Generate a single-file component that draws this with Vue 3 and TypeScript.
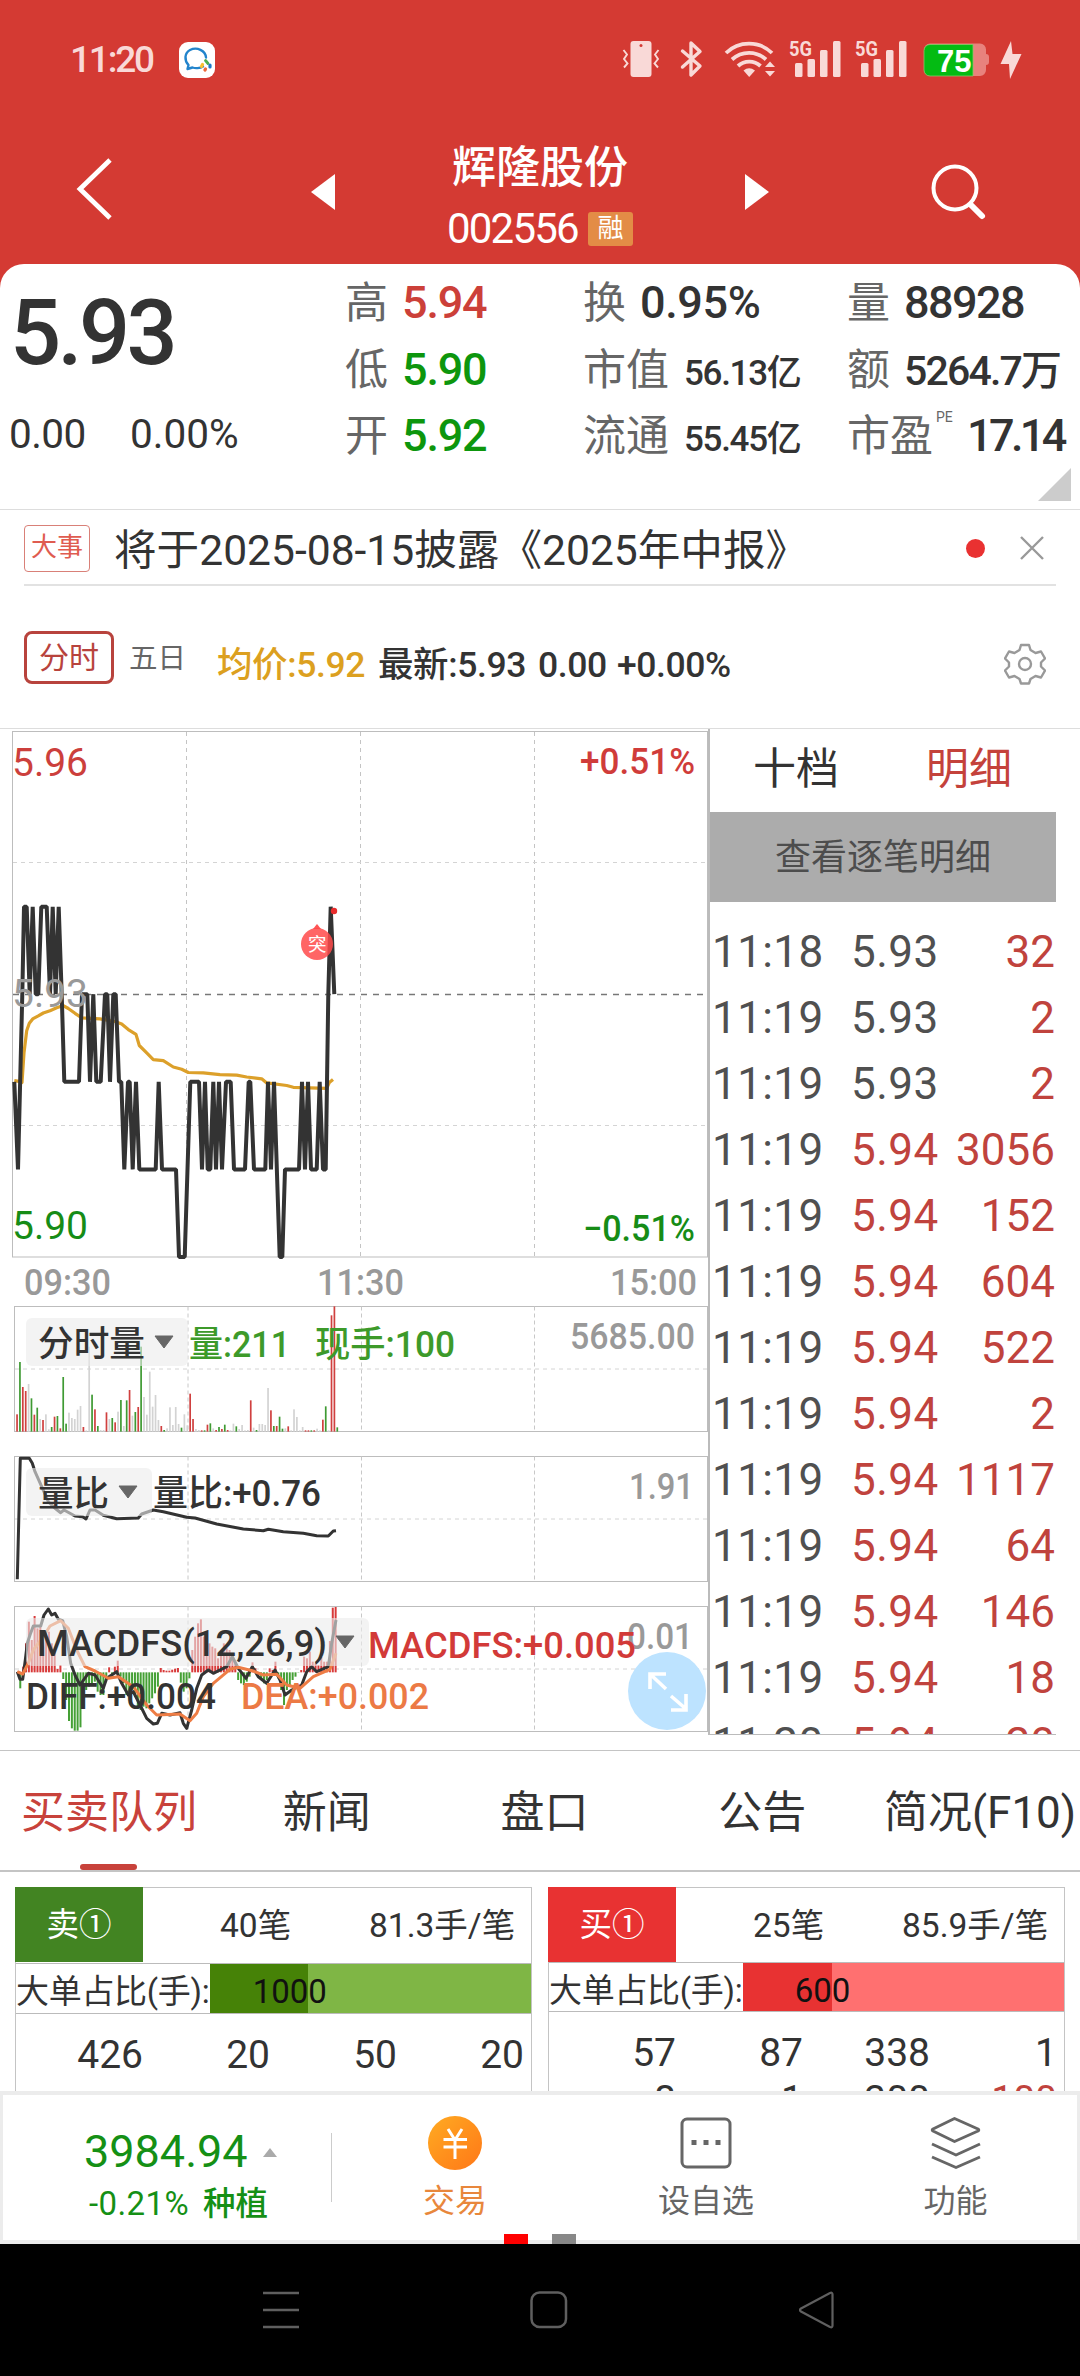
<script setup lang="ts">
type Tone = 'r' | 'g' | 'n'
type Pt = [number, number]

interface Label {
  x: number
  y: number
  w: number
  size: number
  text: string
  fill: string
  weight?: number
}

// ---- price chart -------------------------------------------------------
const priceY = (v: number): number => 731.5 + (5.96 - v) * 8758

const price: Pt[] = [
  [43, 92], [54, 91], [67, 93], [72, 94], [80, 94], [89, 93], [98, 94], [107, 93], [115, 93], [124, 94],
  [140, 94], [150, 93], [158, 94], [167, 93], [176, 94], [185, 93], [193, 92], [237, 92], [246, 93], [262, 93],
  [270, 92], [280, 93], [289, 92], [302, 92], [315, 93], [322, 93], [330, 92], [340, 93], [347, 93], [357, 92], [364, 92],
  [373, 91], [384, 92], [389, 92], [398, 91], [408, 92], [418, 91], [467, 91], [476, 92], [486, 91], [528, 91],
  [537, 90], [554, 90], [571, 92], [597, 92], [606, 91], [615, 92], [623, 91], [631, 91], [640, 92], [648, 91],
  [657, 92], [666, 91], [678, 92], [692, 92], [702, 91], [735, 91], [746, 92], [751, 92], [762, 91], [796, 91],
  [804, 92], [813, 91], [822, 92], [839, 90], [847, 90], [855, 91], [897, 91], [906, 92], [915, 91], [924, 92],
  [933, 91], [950, 91], [959, 92], [969, 91], [977, 91], [985, 93], [992, 94], [1003, 93],
]
const priceLine = price.map(([x, v]) => `${(x / 3).toFixed(1)},${priceY(5 + v / 100).toFixed(1)}`).join(' ')

const average: Pt[] = [
  [43, 975], [57, 977], [66, 980], [72, 900], [80, 840], [88, 820], [98, 808], [115, 800], [130, 792], [150, 786],
  [170, 778], [190, 772], [205, 780], [225, 793], [245, 805], [300, 808], [345, 815], [365, 822], [385, 837],
  [408, 850], [418, 880], [440, 900], [460, 918], [490, 921], [520, 938], [545, 944], [565, 953], [610, 954],
  [660, 959], [710, 960], [740, 965], [785, 970], [800, 981], [860, 988], [880, 993], [980, 996], [988, 980], [999, 972],
]
const averageLine = average.map(([x, y]) => `${(x / 3).toFixed(1)},${(720 + y / 2.7034).toFixed(1)}`).join(' ')

// ---- indicator charts --------------------------------------------------
const fill: Record<Tone, string> = { r: '#d0403f', g: '#3f9a33', n: '#d3d3d3' }

const volume =
  'r373 g216 r291 r303 n282 g325 r374 g353 n387 r390 n373 n418 g411 r380 g378 r415 g261 g401 n368 n384 n387 n359 n348 r411 n421 n170 g314 r358 g408 n420 n420 r367 n387 g384 r397 n365 g330 n408 g331 r300 n377 g366 r351 g170 n321 n374 n245 n350 n315 n390 r408 g420 n415 n352 n405 n351 n402 g413 n373 n406 r311 r387 n417 n420 r421 g421 r404 g400 n415 r420 g411 r417 g404 r420 n421 n401 g409 n417 n405 n421 n420 r331 n413 g420 n402 n402 n405 n294 r361 g408 r408 g380 g416 n415 r409 n421 n358 n381 n421 n411 r421 r421 g421 r421 n416 n421 r389 g349 n421 r76 r49 g412'
    .split(' ')
    .map((s, i) => ({ x: 17 + i * 2.885, top: 1290 + Number(s.slice(1)) / 3, fill: fill[s[0] as Tone] }))

const macd: number[] = [
  1146, 1195, 1130, 1060, 995, 1050, 978, 1015, 1010, 1040, 1030, 1025, 1060, 1085, 1137, 1125, 1167, 1230, 1293,
  1315, 1322, 1322, 1312, 1250, 1200, 1190, 1180, 1175, 1205, 1215, 1215, 1160, 1132, 1160, 1130, 1112, 1160, 1180,
  1215, 1215, 1200, 1220, 1250, 1260, 1250, 1255, 1240, 1225, 1210, 1190, 1134, 1140, 1142, 1142, 1139, 1136, 1134,
  1178, 1205, 1195, 1165, 1080, 1040, 1000, 988, 1040, 1050, 1060, 1070, 1075, 1105, 1085, 1060, 1075, 1080, 1090,
  1120, 1170, 1180, 1185, 1175, 1160, 1117, 1135, 1160, 1165, 1180, 1170, 1135, 1140, 1115, 1165, 1200, 1245, 1200,
  1185, 1170, 1160, 1148, 1140, 1100, 1105, 1085, 1115, 1120, 1125, 1100, 1115, 1115, 1053, 953, 951,
]
const macdBars = macd.map((v, i) => ({
  x: 17.4 + i * 2.867,
  y: 1290 + Math.min(v, 1147) / 3,
  h: Math.abs(v - 1147) / 3,
  fill: v < 1147 ? '#d83a3a' : '#45a035',
}))

const trace = (s: string): string =>
  s
    .split(' ')
    .map((p) => p.split(',').map(Number))
    .map(([x, y]) => `${(x / 3).toFixed(1)},${(1290 + y / 3).toFixed(1)}`)
    .join(' ')

const ratioLine = trace(
  '52,868 61,505 88,505 97,520 105,545 125,590 145,635 165,655 182,668 192,660 225,678 248,680 258,687 270,660 285,660 310,676 350,686 415,684 425,672 460,660 490,665 560,682 585,684 650,702 730,717 790,722 805,718 850,725 910,730 950,737 985,738 1000,723 1008,722',
)
const diffLine = trace(
  '52,1145 60,1168 68,1168 76,1110 82,1060 90,1035 100,1008 122,1008 132,975 145,957 155,975 165,970 175,988 188,992 200,1040 212,1120 225,1155 240,1185 265,1150 285,1155 310,1195 320,1165 350,1145 365,1180 385,1215 400,1205 425,1255 440,1285 460,1302 472,1300 485,1270 510,1275 540,1268 550,1300 560,1315 575,1260 590,1195 605,1155 625,1140 640,1150 680,1130 697,1100 715,1135 738,1165 757,1130 775,1160 800,1180 825,1140 840,1170 855,1215 875,1200 905,1185 920,1145 935,1130 950,1145 985,1130 995,1060 1008,990',
)
const deaLine = trace(
  '52,1145 68,1152 85,1120 100,1080 130,1040 150,1008 182,992 205,1015 230,1080 255,1130 285,1143 325,1165 355,1160 400,1190 440,1245 470,1275 540,1272 570,1292 590,1270 610,1220 640,1180 690,1138 715,1132 760,1143 790,1155 830,1153 860,1185 900,1195 940,1160 990,1138 1008,1090',
)

const panes = [1306.5, 1456.5, 1606.5]

const chips = [
  { y: 1318, w: 162, arrow: 155 },
  { y: 1468, w: 126, arrow: 119 },
  { y: 1618, w: 343, arrow: 336 },
]

const labels: Label[] = [
  { x: 12, y: 775.5, w: 76, size: 38, text: '5.96', fill: '#cc3f3c' },
  { x: 12, y: 1007.4, w: 76, size: 38, text: '5.93', fill: '#999' },
  { x: 12, y: 1238.5, w: 76, size: 38, text: '5.90', fill: '#168c16' },
  { x: 580, y: 774, w: 115, size: 36, text: '+0.51%', fill: '#d03c3a', weight: 500 },
  { x: 583, y: 1241, w: 112, size: 36, text: '−0.51%', fill: '#168c16', weight: 500 },
  { x: 24, y: 1294.5, w: 87, size: 36, text: '09:30', fill: '#999', weight: 500 },
  { x: 317, y: 1294.5, w: 87, size: 36, text: '11:30', fill: '#999', weight: 500 },
  { x: 610, y: 1294.5, w: 87, size: 36, text: '15:00', fill: '#999', weight: 500 },
  { x: 38, y: 1356, w: 107, size: 35.5, text: '分时量', fill: '#333', weight: 500 },
  { x: 189, y: 1357, w: 101, size: 36, text: '量:211', fill: '#3d9a2a', weight: 500 },
  { x: 315, y: 1357, w: 140, size: 36, text: '现手:100', fill: '#3d9a2a', weight: 500 },
  { x: 570, y: 1349, w: 125, size: 36, text: '5685.00', fill: '#999', weight: 500 },
  { x: 38, y: 1506, w: 71, size: 35.5, text: '量比', fill: '#333', weight: 500 },
  { x: 153, y: 1506, w: 168, size: 36, text: '量比:+0.76', fill: '#333', weight: 500 },
  { x: 629, y: 1499, w: 65, size: 36, text: '1.91', fill: '#999', weight: 500 },
  { x: 37, y: 1656, w: 290, size: 36, text: 'MACDFS(12,26,9)', fill: '#333', weight: 500 },
  { x: 627, y: 1649, w: 66, size: 36, text: '0.01', fill: '#999', weight: 500 },
  { x: 368, y: 1657.5, w: 268, size: 36, text: 'MACDFS:+0.005', fill: '#d23a38', weight: 500 },
  { x: 26, y: 1708.5, w: 190, size: 36, text: 'DIFF:+0.004', fill: '#333', weight: 500 },
  { x: 241, y: 1708.5, w: 188, size: 36, text: 'DEA:+0.002', fill: '#ec7a45', weight: 500 },
]

// ---- lists -------------------------------------------------------------
const ticks: { t: string; p: string; v: string }[] = [
  { t: '11:18', p: '5.93', v: '32' },
  { t: '11:19', p: '5.93', v: '2' },
  { t: '11:19', p: '5.93', v: '2' },
  { t: '11:19', p: '5.94', v: '3056' },
  { t: '11:19', p: '5.94', v: '152' },
  { t: '11:19', p: '5.94', v: '604' },
  { t: '11:19', p: '5.94', v: '522' },
  { t: '11:19', p: '5.94', v: '2' },
  { t: '11:19', p: '5.94', v: '1117' },
  { t: '11:19', p: '5.94', v: '64' },
  { t: '11:19', p: '5.94', v: '146' },
  { t: '11:19', p: '5.94', v: '18' },
  { t: '11:20', p: '5.94', v: '20' },
]

const tabs = ['买卖队列', '新闻', '盘口', '公告', '简况(F10)']

const queues = [
  { side: 'sell', name: '卖①', count: '40笔', avg: '81.3手/笔', big: '1000', share: 98, rows: [['426', '20', '50', '20']] },
  { side: 'buy', name: '买①', count: '25笔', avg: '85.9手/笔', big: '600', share: 89, rows: [['57', '87', '338', '1'], ['8', '1', '300', '100']] },
]
</script>

<template>
  <div class="screen">
    <header class="top">
      <div class="status">
        <span class="clock">11:20</span>
        <svg class="chat" width="36" height="36" viewBox="0 0 36 36">
          <rect width="36" height="36" rx="9" fill="#fff" />
          <path d="M24 24.500C21 26.500 16 26.500 13.500 25.500L8.500 27L9.500 23C5 18 5.500 11 11 8C18 4.500 26.500 8.500 27 15.500" fill="none" stroke="#2284cc" stroke-width="2.400" stroke-linecap="round" stroke-linejoin="round" />
          <path d="M26.500 18.500l2.500 3" stroke="#4caf50" stroke-width="2.800" stroke-linecap="round" />
          <path d="M31 23l0 2" stroke="#1d78c8" stroke-width="3.200" stroke-linecap="round" />
          <path d="M23.500 22.500l-1 2" stroke="#f8c030" stroke-width="3.200" stroke-linecap="round" />
          <path d="M26 28l0.500-1" stroke="#ec6a3a" stroke-width="3.200" stroke-linecap="round" />
        </svg>
        <svg class="sys" width="430" height="60" viewBox="0 0 430 60">
          <g fill="#f9d9d7">
            <path d="M23.500 11h15a3 3 0 0 1 3 3v30a3 3 0 0 1-3 3h-15a3 3 0 0 1-3-3v-30a3 3 0 0 1 3-3z" />
            <circle cx="31" cy="15.500" r="1.500" fill="#d43a33" />
            <path d="M13.500 20l3.500 4.500-3 4.500 3.500 4.500-3.500 4M48.500 20l-3.500 4.500 3 4.500-3.500 4.500 3.500 4" fill="none" stroke="#f9d9d7" stroke-width="1.900" />
            <path d="M72.500 21l17.500 15-9 9V13l9 8.500L72.500 37" fill="none" stroke="#f9d9d7" stroke-width="3.400" stroke-linejoin="round" stroke-linecap="round" />
            <g fill="none" stroke="#f9d9d7" stroke-width="3.800">
              <path d="M116 23a33 33 0 0 1 46 0" />
              <path d="M122 29.500a25 25 0 0 1 34 0" />
              <path d="M128 36a16.500 16.500 0 0 1 22.500 0" />
            </g>
            <path d="M133.500 40.500q5.500-4.500 11.500 0l-5.800 6.500z" />
            <path d="M160 31.500l5 5.500h-10zM160 46.500l-5-5.500h10z" />
            <text x="179" y="25.500" font-size="20.500" font-weight="700" textLength="23" lengthAdjust="spacingAndGlyphs">5G</text>
            <rect x="185" y="33" width="7.500" height="14" rx="1.500" /><rect x="197.500" y="29" width="7.500" height="18" rx="1.500" /><rect x="210" y="20" width="7.500" height="27" rx="1.500" /><rect x="223" y="11" width="7.500" height="36" rx="1.500" />
            <text x="245" y="25.500" font-size="20.500" font-weight="700" textLength="23" lengthAdjust="spacingAndGlyphs">5G</text>
            <rect x="251" y="33" width="7.500" height="14" rx="1.500" /><rect x="263.500" y="29" width="7.500" height="18" rx="1.500" /><rect x="276" y="20" width="7.500" height="27" rx="1.500" /><rect x="289" y="11" width="7.500" height="36" rx="1.500" />
            <path d="M320 13.500h50a6 6 0 0 1 6 6v4.500q3 0 3 3v5q0 3-3 3v5a6 6 0 0 1-6 6h-50a6 6 0 0 1-6-6v-20.500a6 6 0 0 1 6-6z" fill="#e8827d" />
            <path d="M320 14.500h43v31.500h-43a6 6 0 0 1-6-6v-19.500a6 6 0 0 1 6-6z" fill="#04bb13" stroke="#8bc46a" stroke-width="0.800" />
            <text x="327" y="41.500" font-size="31" font-weight="700" fill="#fff" textLength="34.500" lengthAdjust="spacingAndGlyphs" font-family="Liberation Sans">75</text>
            <path d="M401 11l-10.500 23h8.500l1 15 11.500-25h-9z" />
          </g>
        </svg>
      </div>
      <div class="bar">
        <svg class="back" width="40" height="66" viewBox="0 0 40 66"><path d="M36 4L6 33L36 62" fill="none" stroke="#fff" stroke-width="4.800" /></svg>
        <svg class="prev" width="24" height="36" viewBox="0 0 24 36"><path d="M24 0v36L0 18z" fill="#fff" /></svg>
        <div class="title">
          <div class="name">辉隆股份</div>
          <div class="code"><span>002556</span><i>融</i></div>
        </div>
        <svg class="next" width="24" height="36" viewBox="0 0 24 36"><path d="M0 0v36L24 18z" fill="#fff" /></svg>
        <svg class="find" width="56" height="58" viewBox="0 0 56 58"><circle cx="24" cy="25" r="21.500" fill="none" stroke="#fff" stroke-width="4" /><path d="M40 42L51 53" stroke="#fff" stroke-width="6" stroke-linecap="round" /></svg>
      </div>
    </header>

    <section class="quote">
      <div class="last">
        <b>5.93</b>
        <div class="chg"><span>0.00</span><span>0.00%</span></div>
      </div>
      <div class="col c1">
        <div><em>高</em><strong class="up">5.94</strong></div>
        <div><em>低</em><strong class="down">5.90</strong></div>
        <div><em>开</em><strong class="down">5.92</strong></div>
      </div>
      <div class="col c2">
        <div><em>换</em><strong>0.95%</strong></div>
        <div><em>市值</em><strong class="sm">56.13亿</strong></div>
        <div><em>流通</em><strong class="sm">55.45亿</strong></div>
      </div>
      <div class="col c3">
        <div><em>量</em><strong class="vol">88928</strong></div>
        <div><em>额</em><strong class="amt">5264.7万</strong></div>
        <div><em>市盈</em><sup>PE</sup><strong class="pe">17.14</strong></div>
      </div>
      <svg class="corner" width="33" height="33" viewBox="0 0 33 33"><path d="M33 0V33H0z" fill="#ccc" /></svg>
    </section>

    <section class="notice">
      <span class="tag">大事</span>
      <span class="msg">将于2025-08-15披露《2025年中报》</span>
      <i class="dot"></i>
      <svg class="close" width="24" height="24" viewBox="0 0 24 24"><path d="M1 1L23 23M23 1L1 23" stroke="#999" stroke-width="2.400" /></svg>
    </section>

    <section class="period">
      <span class="minute">分时</span>
      <span class="five">五日</span>
      <span class="k avg">均价:5.92</span>
      <span class="k">最新:5.93</span>
      <span class="k zero">0.00</span>
      <span class="k pct">+0.00%</span>
      <svg class="gear" width="42" height="42" viewBox="0 0 42 42">
        <g fill="none" stroke="#999" stroke-width="2.400" stroke-linejoin="round">
          <path d="M17 2h8l1.500 5 5 3 5.500-1.500 4 7-4 4v4l4 4-4 7-5.500-1.500-5 3L25 40.500h-8L15.500 36l-5-3L5 34.500l-4-7 4-4v-4l-4-4 4-7L10.500 10l5-3z" />
          <circle cx="21" cy="21" r="6" />
        </g>
      </svg>
    </section>

    <section class="market">
      <svg class="chart" width="708" height="1021" viewBox="0 729 708 1021">
        <g fill="none" stroke="#bdbdbd" stroke-width="1">
          <rect x="12.500" y="731.500" width="695" height="525.500" />
          <path d="M186.500 732V1257M360.500 732V1257M534.500 732V1257" stroke="#c4c4c4" stroke-dasharray="4 4" />
          <path d="M13 862.500H707M13 1125.500H707" stroke="#d4d4d4" stroke-dasharray="4 4" />
          <path d="M13 994.500H707" stroke="#777" stroke-width="1.400" stroke-dasharray="6 6" />
          <g v-for="y in panes" :key="y">
            <rect x="14.500" :y="y" width="693" height="125" />
            <path :d="`M188 ${y}v125M361.500 ${y}v125M534.500 ${y}v125`" stroke="#c8c8c8" stroke-dasharray="4 3" />
            <path :d="`M15 ${y + 62.5}H707`" stroke="#d4d4d4" stroke-dasharray="4 4" />
          </g>
        </g>
        <polyline :points="averageLine" fill="none" stroke="#dca02a" stroke-width="3.200" stroke-linejoin="round" />
        <polyline :points="priceLine" fill="none" stroke="#333" stroke-width="4" stroke-linejoin="bevel" />
        <circle cx="334" cy="911" r="3.200" fill="#e82c2c" />
        <path d="M317 924l4 5h-8z" fill="#ff5555" />
        <circle cx="317" cy="944" r="16" fill="#ff4a4a" fill-opacity=".85" />
        <text x="308" y="951" font-size="18.500" fill="#fff">突</text>

        <rect v-for="(b, i) in volume" :key="'v' + i" :x="b.x - 0.8" :y="b.top" width="1.700" :height="1431.6 - b.top" :fill="b.fill" />
        <polyline :points="ratioLine" fill="none" stroke="#333" stroke-width="3" stroke-linejoin="round" />
        <rect v-for="(b, i) in macdBars" :key="'m' + i" :x="b.x - 1" :y="b.y" width="2" :height="b.h" :fill="b.fill" />
        <polyline :points="diffLine" fill="none" stroke="#333" stroke-width="3" stroke-linejoin="round" />
        <polyline :points="deaLine" fill="none" stroke="#ee7d45" stroke-width="3" stroke-linejoin="round" />

        <g v-for="c in chips" :key="c.y">
          <rect x="26" :y="c.y" :width="c.w" height="48" rx="6" fill="#ebebeb" fill-opacity=".6" />
          <path :d="`M${c.arrow} ${c.y + 18}h18l-9 12z`" fill="#666" stroke="#666" stroke-linejoin="round" />
        </g>
        <text
          v-for="l in labels"
          :key="l.text + l.y"
          :x="l.x"
          :y="l.y"
          :textLength="l.w"
          lengthAdjust="spacingAndGlyphs"
          :font-size="l.size"
          :font-weight="l.weight ?? 400"
          :fill="l.fill"
        >{{ l.text }}</text>
        <circle cx="667" cy="1691" r="39" fill="#bde3ff" />
        <path d="M666 1689L650 1674M650 1689V1674H666M671 1696L686 1709M671 1710H686V1694" fill="none" stroke="#fff" stroke-width="3.600" />
      </svg>

      <aside class="panel">
        <div class="ptabs"><span>十档</span><span class="act">明细</span></div>
        <div class="each">查看逐笔明细</div>
        <div class="ticks">
          <div v-for="(r, i) in ticks" :key="i" class="tick">
            <span class="t">{{ r.t }}</span>
            <span class="p" :class="{ hot: r.p === '5.94' }">{{ r.p }}</span>
            <span class="v">{{ r.v }}</span>
          </div>
        </div>
      </aside>
    </section>

    <nav class="tabs">
      <span v-for="(t, i) in tabs" :key="t" :class="{ act: i === 0 }">{{ t }}</span>
    </nav>

    <section class="queues">
      <div v-for="q in queues" :key="q.side" class="queue" :class="q.side">
        <div class="qh"><b>{{ q.name }}</b><span class="cnt">{{ q.count }}</span><span class="per">{{ q.avg }}</span></div>
        <div class="qb">
          <span class="cap">大单占比(手):</span>
          <div class="meter"><i :style="{ width: q.share + 'px' }"></i><span>{{ q.big }}</span></div>
        </div>
        <div class="rows">
          <div v-for="(r, i) in q.rows" :key="i" class="row"><span v-for="(n, j) in r" :key="j" :class="{ hot: i === 1 && j === 3 }">{{ n }}</span></div>
        </div>
      </div>
    </section>

    <footer class="dock">
      <div class="index">
        <div class="pt">3984.94<svg width="14" height="9" viewBox="0 0 14 9"><path d="M7 0l7 9H0z" fill="#aaa" /></svg></div>
        <div class="pc"><span>-0.21%</span><b>种植</b></div>
      </div>
      <div class="act trade">
        <svg width="54" height="54" viewBox="0 0 54 54">
          <defs><linearGradient id="coin" x1="0" y1="0" x2="1" y2="1"><stop offset="0" stop-color="#ffab22" /><stop offset="1" stop-color="#ff7717" /></linearGradient></defs>
          <circle cx="27" cy="27" r="27" fill="url(#coin)" />
          <path d="M20 13l7 11 7-11M15.500 23.500h23.500M15.500 31h23.500M27 23v20" fill="none" stroke="#fff" stroke-width="3" />
        </svg>
        <span>交易</span>
      </div>
      <div class="act own">
        <svg width="54" height="54" viewBox="0 0 54 54"><rect x="3" y="3" width="48" height="48" rx="5" fill="none" stroke="#666" stroke-width="3" /><path d="M12.500 24h5v5h-5zM24.500 24h5v5h-5zM36.500 24h5v5h-5z" fill="#666" /></svg>
        <span>设自选</span>
      </div>
      <div class="act more">
        <svg width="54" height="54" viewBox="0 0 54 54"><path d="M25.500 2.500L49 13q1.500 1 0 2L25.500 25.500 4 15q-1.500-1 0-2zM3 28l24 11L51 28M3 41l24 10.500L51 41" fill="none" stroke="#666" stroke-width="3" stroke-linejoin="round" /></svg>
        <span>功能</span>
      </div>
      <i class="pg first"></i><i class="pg"></i>
    </footer>

    <div class="sysnav">
      <svg width="36" height="38" viewBox="0 0 36 38"><path d="M0 2h36M0 19h36M0 36h36" stroke="#5f5f5f" stroke-width="2.600" /></svg>
      <svg width="38" height="38" viewBox="0 0 38 38"><rect x="1.500" y="1.500" width="34.500" height="34.500" rx="8" fill="none" stroke="#5f5f5f" stroke-width="2.500" /></svg>
      <svg width="36" height="38" viewBox="0 0 36 38"><path d="M2 17.500L31 2q2.500-1 2.500 1.500v31q0 2.500-2.500 1.500L2 20.500q-2-1.500 0-3z" fill="none" stroke="#5f5f5f" stroke-width="2.200" /></svg>
    </div>
  </div>
</template>

<style>
body {
  background: #000;
}
</style>

<style scoped>
.screen {
  width: 1080px;
  height: 2376px;
  display: flex;
  flex-direction: column;
  overflow: hidden;
  background: #fff;
  color: #333;
  font-family: Roboto, 'Noto Sans CJK SC', sans-serif;
}
.screen * {
  box-sizing: border-box;
}
.screen > * {
  flex: none;
}
i,
em {
  font-style: normal;
}
span,
b,
strong,
em {
  white-space: nowrap;
}
svg {
  display: block;
  flex: none;
}

.top {
  height: 288px;
  background: #d43a33;
  color: #fff;
}
.status {
  height: 120px;
  display: flex;
  align-items: center;
}
.clock {
  width: 109px;
  margin-left: 70px;
  font-size: 37px;
  font-weight: 500;
  line-height: 40px;
  letter-spacing: -2.2px;
  color: #f9d9d7;
}
.sys {
  margin-left: auto;
  margin-right: 40px;
}
.bar {
  height: 144px;
  display: flex;
  align-items: flex-start;
}
.back {
  margin: 36px 0 0 74px;
}
.prev {
  margin: 54px 0 0 197px;
}
.title {
  width: 410px;
  padding-top: 23px;
}
.name {
  text-align: center;
  font-size: 44px;
  line-height: 50px;
  font-weight: 500;
}
.code {
  display: flex;
  align-items: center;
  padding-left: 112px;
  height: 36px;
  margin-top: 18px;
}
.code span {
  font-size: 42px;
  line-height: 36px;
  letter-spacing: -1.8px;
  width: 141px;
}
.code i {
  width: 45px;
  height: 34px;
  border-radius: 3px;
  background: #e38c46;
  font-size: 26px;
  line-height: 33px;
  text-align: center;
}
.next {
  margin: 54px 0 0 0;
}
.find {
  margin: 43px 0 0 162px;
}

.quote {
  position: relative;
  height: 246px;
  margin-top: -24px;
  border-radius: 24px 24px 0 0;
  background: #fff;
  display: flex;
  border-bottom: 1px solid #ddd;
  padding-top: 6px;
}
.last {
  width: 345px;
}
.last b {
  display: block;
  padding-left: 10px;
  margin-top: 16px;
  font-size: 90px;
  line-height: 96px;
  font-weight: 500;
  letter-spacing: -3.6px;
}
.chg {
  display: flex;
  margin-top: 30px;
  padding-left: 9px;
  font-size: 40.5px;
  line-height: 44px;
  letter-spacing: 0;
}
.chg span:first-child {
  width: 121px;
  letter-spacing: -0.6px;
}
.col > div {
  height: 66.5px;
  line-height: 66px;
  display: flex;
  align-items: baseline;
}
.c1 {
  width: 238px;
}
.c2 {
  width: 264px;
}
em {
  font-size: 43px;
  color: #666;
  margin-right: 14px;
}
strong {
  font-size: 45px;
  font-weight: 500;
  letter-spacing: -1.2px;
}
.c2 strong {
  letter-spacing: -0.4px;
}
.c2 .sm {
  font-size: 35px;
  letter-spacing: -1.3px;
  margin-left: 1px;
}
.vol {
  letter-spacing: -1.6px;
}
.amt {
  font-size: 41px;
  letter-spacing: -1.8px;
}
.pe {
  letter-spacing: -3.6px;
}
.c3 sup {
  font-size: 14px;
  line-height: 20px;
  width: 31px;
  margin-left: -11px;
  align-self: flex-start;
  color: #666;
  margin-top: 4px;
}
.up {
  color: #cc4039;
}
.down {
  color: #0d960d;
}
.corner {
  position: absolute;
  right: 9px;
  bottom: 8px;
}

.notice {
  height: 76px;
  margin: 0 24px;
  width: 1032px;
  display: flex;
  align-items: center;
  border-bottom: 2px solid #e2e2e2;
}
.tag {
  width: 66px;
  height: 47px;
  margin-top: 2px;
  border: 1.5px solid #d98078;
  border-radius: 4px;
  color: #df5c50;
  font-size: 26px;
  line-height: 43px;
  text-align: center;
}
.msg {
  margin-left: 24px;
  margin-top: 5px;
  width: 852px;
  font-size: 42.6px;
  line-height: 50px;
}
.dot {
  width: 19px;
  height: 19px;
  border-radius: 50%;
  background: #e93131;
  margin-top: 2px;
}
.close {
  margin-left: 35px;
  margin-top: 2px;
}

.period {
  height: 143px;
  display: flex;
  align-items: flex-start;
  border-bottom: 1px solid #ddd;
  padding: 45px 0 0 24px;
}
.minute {
  width: 90px;
  height: 53px;
  border: 3px solid #b8433d;
  border-radius: 8px;
  color: #b8433d;
  font-size: 30px;
  line-height: 48px;
  text-align: center;
}
.five {
  margin-left: 15px;
  width: 88px;
  font-size: 28.5px;
  line-height: 55px;
  color: #666;
}
.k {
  font-size: 35.5px;
  line-height: 68px;
  font-weight: 500;
  width: 160px;
  letter-spacing: -0.4px;
}
.avg {
  width: 161px;
  color: #dca020;
}
.zero {
  width: 79px;
}
.pct {
  width: 387px;
}
.gear {
  margin-top: 12px;
}

.market {
  height: 1021px;
  display: flex;
}
.chart {
  width: 708px;
}
.panel {
  width: 348px;
  height: 1006px;
  border-left: 2px solid #bbb;
  border-bottom: 1px solid #bbb;
  overflow: hidden;
}
.ptabs {
  height: 83px;
  display: flex;
  justify-content: space-between;
  font-size: 43px;
  line-height: 81px;
  padding: 0 44px 0 43px;
}
.ptabs .act {
  color: #c4423b;
}
.each {
  height: 90px;
  background: #acacac;
  color: #4d4d4d;
  font-size: 36px;
  line-height: 92px;
  text-align: center;
}
.ticks {
  padding-top: 17px;
}
.tick {
  height: 66px;
  display: flex;
  font-size: 44px;
  line-height: 66px;
  color: #505050;
}
.t {
  width: 141px;
  padding-left: 2px;
  letter-spacing: 0.4px;
}
.p {
  width: 90px;
  letter-spacing: 0.5px;
}
.v {
  width: 114px;
  text-align: right;
  color: #c0433d;
}
.hot {
  color: #c0433d !important;
}

.tabs {
  height: 122px;
  border-top: 1px solid #c4c4c4;
  border-bottom: 2px solid #c4c4c4;
  display: flex;
}
.tabs span {
  position: relative;
  width: 217.8px;
  flex: none;
  text-align: center;
  font-size: 44px;
  line-height: 124px;
}
.tabs .act {
  color: #c8423b;
}
.tabs .act::after {
  content: '';
  position: absolute;
  left: 80px;
  bottom: 0;
  width: 57px;
  height: 6px;
  border-radius: 3px;
  background: #c8423b;
}

.queues {
  height: 219px;
  padding: 15px 15px 0;
  display: flex;
  gap: 16px;
  overflow: hidden;
}
.queue {
  width: 517px;
  border: 1px solid #c4c4c4;
  height: 300px;
}
.qh {
  height: 75px;
  display: flex;
  font-size: 33.5px;
  line-height: 76px;
}
.qh b {
  width: 128px;
  margin: -1px 0 0 -1px;
  height: 75px;
  color: #fff;
  font-size: 32.5px;
  font-weight: 400;
  text-align: center;
}
.sell b {
  background: #428422;
}
.buy b {
  background: #e83232;
}
.cnt {
  margin-left: 77px;
  width: 149px;
}
.qb {
  height: 51px;
  display: flex;
  border-top: 1px solid #bbb;
  border-bottom: 1px solid #bbb;
  font-size: 33px;
  line-height: 56px;
}
.buy .qb {
  height: 50px;
}
.buy .qh {
  height: 74px;
}
.cap {
  width: 194px;
  letter-spacing: -0.3px;
}
.meter {
  position: relative;
  width: 322px;
  display: flex;
  background: #7fb645;
}
.meter i {
  background: #468207;
}
.meter span {
  position: absolute;
  left: 43px;
  top: 0;
  color: #111;
}
.buy .meter {
  background: #ff7070;
}
.buy .meter i {
  background: #e83232;
}
.buy .meter span {
  left: 52px;
}
.row {
  display: flex;
  height: 47px;
  font-size: 39px;
  line-height: 83px;
}
.buy .row {
  line-height: 82px;
}
.row span {
  width: 127px;
  text-align: right;
}

.dock {
  position: relative;
  height: 153px;
  background: #fff;
  border: 3px solid #ececec;
  border-top-width: 4px;
  border-bottom-width: 4px;
  display: flex;
}
.index {
  width: 329px;
  height: 69px;
  margin-top: 38px;
  border-right: 1.5px solid #ccc;
  color: #159015;
}
.pt {
  display: flex;
  align-items: center;
  padding-left: 81px;
  font-size: 45px;
  line-height: 50px;
  margin-top: -6px;
}
.pt svg {
  margin-left: 15px;
}
.pc {
  display: flex;
  padding-left: 86px;
  font-size: 33px;
  line-height: 46px;
  margin-top: 4px;
}
.pc span {
  letter-spacing: 0.4px;
}
.pc b {
  font-weight: 500;
  font-size: 32.5px;
  margin-left: 14px;
}
.dock .act {
  width: 250px;
  display: flex;
  flex-direction: column;
  align-items: center;
  padding-top: 21px;
  color: #666;
  font-size: 32px;
  line-height: 44px;
}
.dock .act span {
  margin-top: 9px;
}
.dock .trade {
  width: 246px;
  color: #e8873c;
}
.dock .own {
  width: 256px;
}
.dock .more {
  width: 243px;
}
.pg {
  position: absolute;
  left: 549px;
  bottom: -4px;
  width: 24px;
  height: 10px;
  background: #888;
}
.pg.first {
  left: 501px;
  background: #f00;
}

.sysnav {
  height: 132px;
  background: #000;
  display: flex;
  padding: 47px 0 0 263px;
  gap: 231px;
}
</style>
